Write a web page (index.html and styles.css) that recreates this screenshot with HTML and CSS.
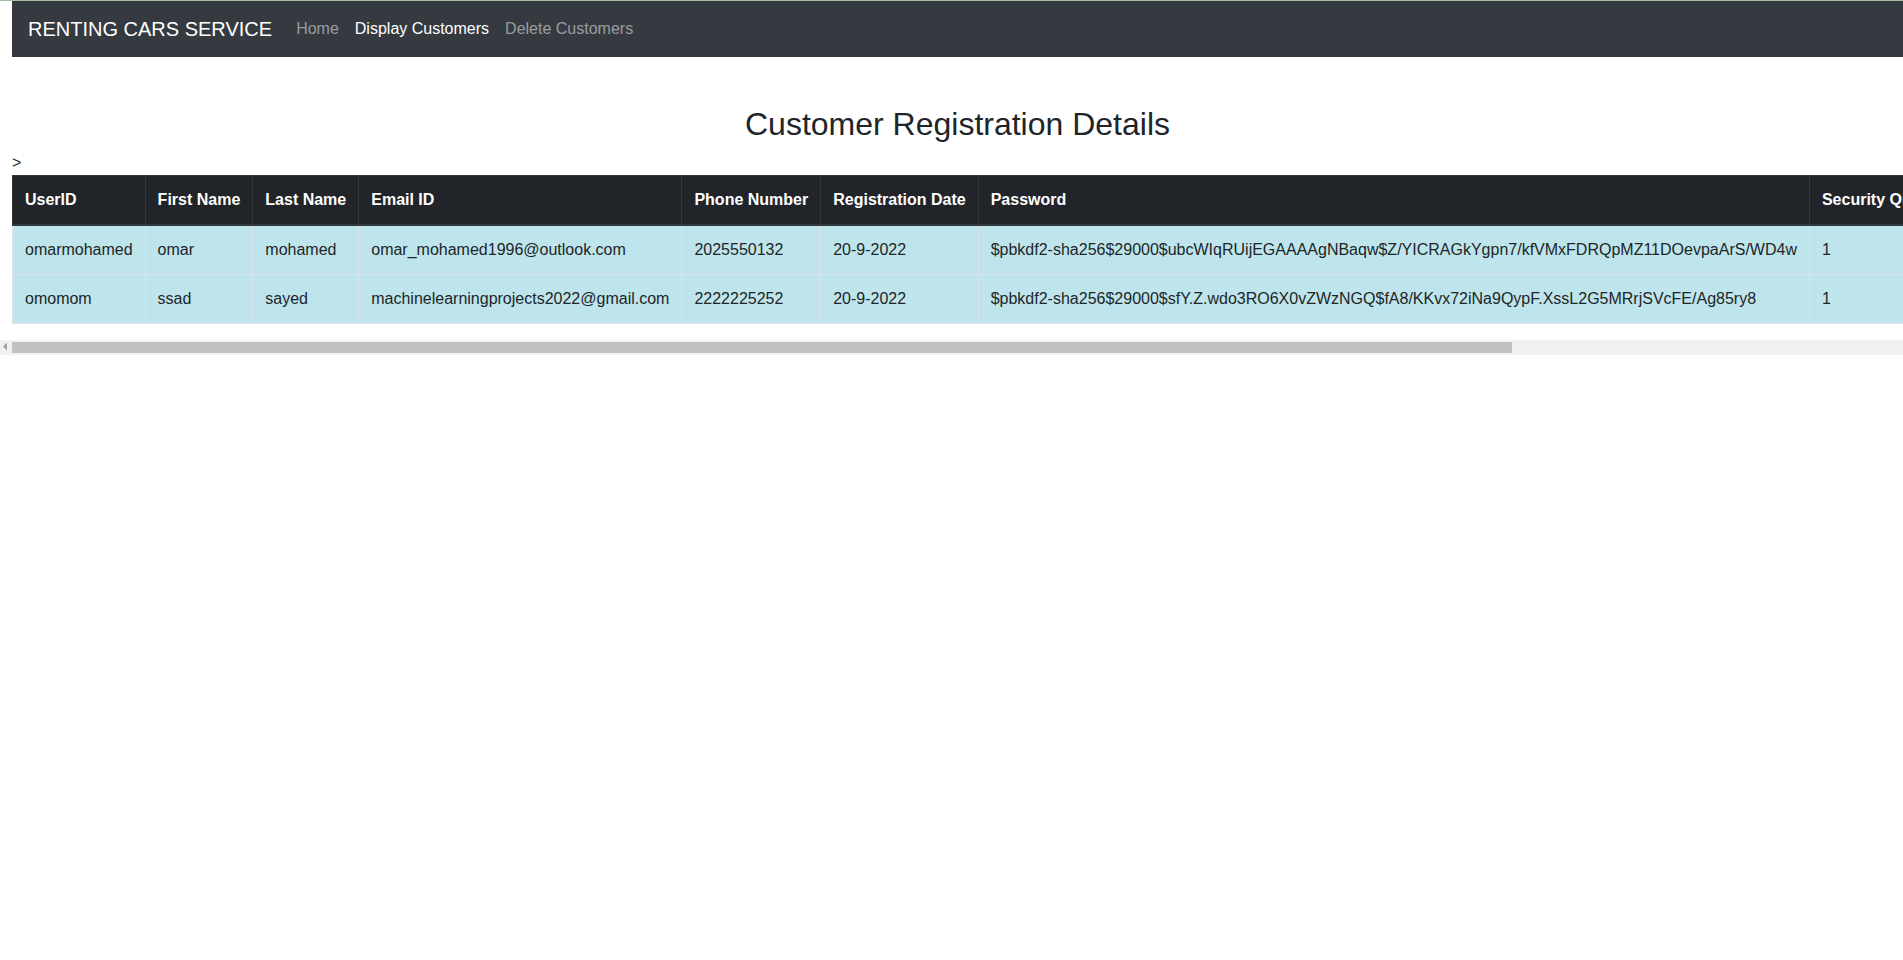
FILE: index.html
```html
<!DOCTYPE html>
<html lang="en">
<head>
<meta charset="utf-8">
<title>Customer Registration Details</title>
<link rel="stylesheet" href="styles.css">
</head>
<body>
<div class="page">
  <nav class="navbar">
    <a class="brand" href="#">RENTING CARS SERVICE</a>
    <ul class="nav">
      <li><a class="nav-link" href="#">Home</a></li>
      <li><a class="nav-link active" href="#">Display Customers</a></li>
      <li><a class="nav-link" href="#">Delete Customers</a></li>
    </ul>
  </nav>
  <h2 class="title">Customer Registration Details</h2>
  <div class="stray">&gt;</div>
</div>
<div class="table-responsive">
  <div class="table-inner">
    <table class="table">
      <thead>
        <tr>
          <th>UserID</th>
          <th>First Name</th>
          <th>Last Name</th>
          <th>Email ID</th>
          <th>Phone Number</th>
          <th>Registration Date</th>
          <th>Password</th>
          <th>Security Question</th>
        </tr>
      </thead>
      <tbody>
        <tr>
          <td>omarmohamed</td>
          <td>omar</td>
          <td>mohamed</td>
          <td>omar_mohamed1996@outlook.com</td>
          <td>2025550132</td>
          <td>20-9-2022</td>
          <td>$pbkdf2-sha256$29000$ubcWIqRUijEGAAAAgNBaqw$Z/YICRAGkYgpn7/kfVMxFDRQpMZ11DOevpaArS/WD4w</td>
          <td>1</td>
        </tr>
        <tr>
          <td>omomom</td>
          <td>ssad</td>
          <td>sayed</td>
          <td>machinelearningprojects2022@gmail.com</td>
          <td>2222225252</td>
          <td>20-9-2022</td>
          <td>$pbkdf2-sha256$29000$sfY.Z.wdo3RO6X0vZWzNGQ$fA8/KKvx72iNa9QypF.XssL2G5MRrjSVcFE/Ag85ry8</td>
          <td>1</td>
        </tr>
      </tbody>
    </table>
  </div>
</div>
<div class="scrollbar" aria-hidden="true">
  <div class="sb-button"></div>
  <div class="sb-track"><div class="sb-thumb"></div></div>
</div>
</body>
</html>
```

FILE: styles.css
```css
html {
  overflow: hidden;
}

body {
  margin: 0;
  border-top: 1px solid #a4bca2;
  font-family: "Liberation Sans", Arial, sans-serif;
  font-size: 16px;
  line-height: 1.5;
  color: #212529;
  background: #fff;
}

.page {
  padding-left: 12px;
}

.navbar {
  display: flex;
  align-items: center;
  padding: 8px 16px;
  background: #343a40;
}

.brand {
  font-size: 20px;
  line-height: 30px;
  padding: 5px 0;
  margin-right: 16px;
  color: #fff;
  text-decoration: none;
  white-space: nowrap;
}

.nav {
  display: flex;
  list-style: none;
  margin: 0;
  padding: 0;
}

.nav-link {
  display: block;
  padding: 8px;
  color: rgba(255, 255, 255, 0.5);
  text-decoration: none;
}

.nav-link.active {
  color: #fff;
}

.title {
  margin: 48px 0 8px;
  font-size: 32px;
  font-weight: 500;
  line-height: 1.2;
  text-align: center;
}

.table-responsive {
  overflow: hidden;
  padding-left: 12px;
}

.table-inner {
  width: 2387px;
}

.table {
  border-collapse: collapse;
  margin-bottom: 16px;
  white-space: nowrap;
}

.table th,
.table td {
  padding: 12px;
  text-align: left;
  vertical-align: top;
}

.table thead th {
  color: #fff;
  font-weight: 700;
  background: #212529;
  border: 1px solid #32383e;
  border-bottom: 2px solid #32383e;
}

.table tbody td {
  background: #bee5eb;
  border: 1px solid #dee2e6;
}

.scrollbar {
  display: flex;
  height: 15px;
  background: #f1f1f1;
}

.sb-button {
  flex: 0 0 12px;
  background-image:
    linear-gradient(to bottom right, transparent 50%, #a3a3a3 50%),
    linear-gradient(to top right, transparent 50%, #a3a3a3 50%);
  background-size: 4px 4px, 4px 4px;
  background-position: 3px 3px, 3px 7px;
  background-repeat: no-repeat;
}

.sb-track {
  flex: 1;
  display: flex;
  align-items: center;
}

.sb-thumb {
  width: 1500px;
  height: 11px;
  background: #c1c1c1;
}
```
